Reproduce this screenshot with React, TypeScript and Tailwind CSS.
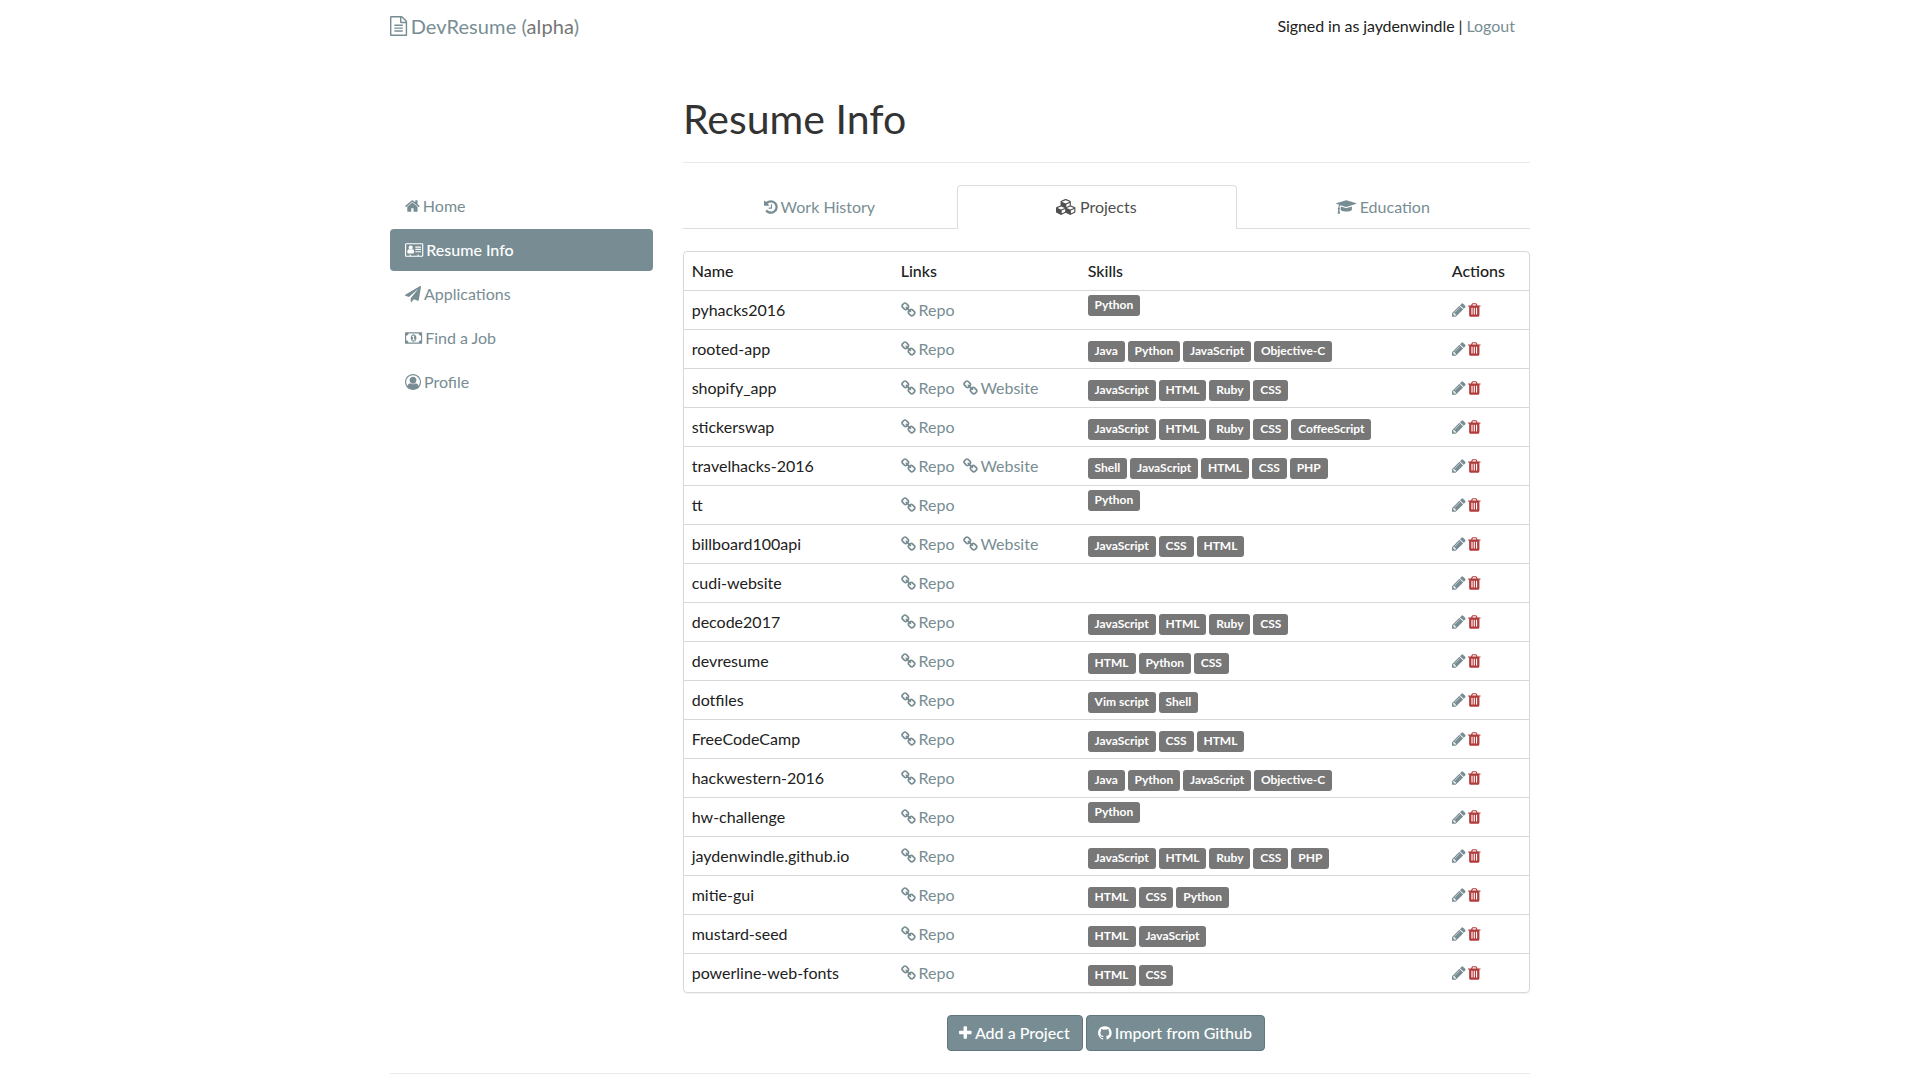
import React from 'react';

type IconDef = { x: number; w: number; d: string };

const ICONS = {
  file: { x: 128, w: 1536, d: 'M1596 380q28 28 48 76t20 88v1152q0 40-28 68t-68 28h-1344q-40 0-68-28t-28-68v-1600q0-40 28-68t68-28h896q40 0 88 20t76 48zm-444-244v376h376q-10-29-22-41l-313-313q-12-12-41-22zm384 1528v-1024h-416q-40 0-68-28t-28-68v-416h-768v1536h1280zm-1024-864q0-14 9-23t23-9h704q14 0 23 9t9 23v64q0 14-9 23t-23 9h-704q-14 0-23-9t-9-23v-64zm736 224q14 0 23 9t9 23v64q0 14-9 23t-23 9h-704q-14 0-23-9t-9-23v-64q0-14 9-23t23-9h704zm0 256q14 0 23 9t9 23v64q0 14-9 23t-23 9h-704q-14 0-23-9t-9-23v-64q0-14 9-23t23-9h704z' },
  home: { x: 64, w: 1664, d: 'M1472 992v480q0 26-19 45t-45 19h-384v-384h-256v384h-384q-26 0-45-19t-19-45v-480q0-1 .5-3t.5-3l575-474 575 474q1 2 1 6zm223-69l-62 74q-8 9-21 11h-3q-13 0-21-7l-692-577-692 577q-12 8-24 7-13-2-21-11l-62-74q-8-10-7-23.5t11-21.5l719-599q32-26 76-26t76 26l244 204v-195q0-14 9-23t23-9h192q14 0 23 9t9 23v408l219 182q10 8 11 21.5t-7 23.5z' },
  card: { x: 0, w: 2048, d: 'M1024 1131q0-64-9-117.5t-29.5-103-60.5-78-97-28.5q-6 4-30 18t-37.5 21.5-35.5 17.5-43 14.5-42 4.5-42-4.5-43-14.5-35.5-17.5-37.5-21.5-30-18q-57 0-97 28.5t-60.5 78-29.5 103-9 117.5 37 106.5 91 42.5h512q54 0 91-42.5t37-106.5zm-157-520q0-94-66.5-160.5t-160.5-66.5-160.5 66.5-66.5 160.5 66.5 160.5 160.5 66.5 160.5-66.5 66.5-160.5zm925 509v-64q0-14-9-23t-23-9h-576q-14 0-23 9t-9 23v64q0 14 9 23t23 9h576q14 0 23-9t9-23zm0-260v-56q0-15-10.5-25.5t-25.5-10.5h-568q-15 0-25.5 10.5t-10.5 25.5v56q0 15 10.5 25.5t25.5 10.5h568q15 0 25.5-10.5t10.5-25.5zm0-252v-64q0-14-9-23t-23-9h-576q-14 0-23 9t-9 23v64q0 14 9 23t23 9h576q14 0 23-9t9-23zm128 896v-1216q0-13-9.5-22.5t-22.5-9.5h-1728q-13 0-22.5 9.5t-9.5 22.5v1216q0 13 9.5 22.5t22.5 9.5h352v-96q0-14 9-23t23-9h64q14 0 23 9t9 23v96h768v-96q0-14 9-23t23-9h64q14 0 23 9t9 23v96h352q13 0 22.5-9.5t9.5-22.5zm128-1216v1216q0 66-47 113t-113 47h-1728q-66 0-113-47t-47-113v-1216q0-66 47-113t113-47h1728q66 0 113 47t47 113z' },
  plane: { x: 0, w: 1792, d: 'M1764 11q33 24 27 64l-256 1536q-5 29-32 45-14 8-31 8-11 0-24-5l-453-185-242 295q-18 23-49 23-13 0-22-4-19-7-30.5-23.5t-11.5-36.5v-349l864-1059-1069 925-395-162q-37-14-40-55-2-40 32-59l1664-960q15-9 32-9 20 0 36 11z' },
  money: { x: 0, w: 1920, d: 'M768 1152h384v-96h-128v-448h-114l-148 137 77 80q42-37 55-57h2v288h-128v96zm512-256q0 70-21 142t-59.5 134-101.5 101-138 39-138-39-101.5-101-59.5-134-21-142 21-142 59.5-134 101.5-101 138-39 138 39 101.5 101 59.5 134 21 142zm512 256v-512q-106 0-181-75t-75-181h-1152q0 106-75 181t-181 75v512q106 0 181 75t75 181h1152q0-106 75-181t181-75zm128-832v1152q0 26-19 45t-45 19h-1792q-26 0-45-19t-19-45v-1152q0-26 19-45t45-19h1792q26 0 45 19t19 45z' },
  user: { x: 0, w: 1792, d: 'M896 0q182 0 348 71t286 191 191 286 71 348q0 181-70.5 347t-190.5 286-286 191.5-349 71.5-349-71-285.5-191.5-190.5-286-71-347.5 71-348 191-286 286-191 348-71zm619 1351q149-205 149-455 0-156-61-298t-164-245-245-164-298-61-298 61-245 164-164 245-61 298q0 250 149 455 66-327 306-327 131 128 313 128t313-128q240 0 306 327zm-235-647q0-159-112.5-271.5t-271.5-112.5-271.5 112.5-112.5 271.5 112.5 271.5 271.5 112.5 271.5-112.5 112.5-271.5z' },
  history: { x: 128, w: 1536, d: 'M1664 896q0 156-61 298t-164 245-245 164-298 61q-172 0-327-72.5t-264-204.5q-7-10-6.5-22.5t8.5-20.5l137-138q10-9 25-9 16 2 23 12 73 95 179 147t225 52q104 0 198.5-40.5t163.5-109.5 109.5-163.5 40.5-198.5-40.5-198.5-109.5-163.5-163.5-109.5-198.5-40.5q-98 0-188 35.5t-160 101.5l137 138q31 30 14 69-17 40-59 40h-448q-26 0-45-19t-19-45v-448q0-42 40-59 39-17 69 14l130 129q107-101 244.5-156.5t284.5-55.5q156 0 298 61t245 164 164 245 61 298zm-640-288v448q0 14-9 23t-23 9h-320q-14 0-23-9t-9-23v-64q0-14 9-23t23-9h224v-352q0-14 9-23t23-9h64q14 0 23 9t9 23z' },
  cubes: { x: 0, w: 2304, d: 'M640 1632l384-192v-314l-384 164v342zm-64-454l404-173-404-173-404 173zm1088 454l384-192v-314l-384 164v342zm-64-454l404-173-404-173-404 173zm-448-293l384-165v-266l-384 164v267zm-64-379l441-189-441-189-441 189zm1088 518v416q0 36-19 67t-52 47l-448 224q-25 14-57 14t-57-14l-448-224q-5-2-7-4-2 2-7 4l-448 224q-25 14-57 14t-57-14l-448-224q-33-16-52-47t-19-67v-416q0-38 21.5-70t56.5-48l434-186v-400q0-38 21.5-70t56.5-48l448-192q23-10 50-10t50 10l448 192q35 16 56.5 48t21.5 70v400l434 186q36 16 57 48t21 70z' },
  cap: { x: 0, w: 2304, d: 'M1774 836l18 316q4 69-82 128t-235 93.5-323 34.5-323-34.5-235-93.5-82-128l18-316 574 181q22 7 48 7t48-7zm530-324q0 23-22 31l-1120 352q-4 1-10 1t-10-1l-652-206q-43 34-71 111.5t-34 178.5q63 36 63 109 0 69-58 107l58 433q2 14-8 25-9 11-24 11h-192q-15 0-24-11-10-11-8-25l58-433q-58-38-58-107 0-73 65-111 11-207 98-330l-333-104q-22-8-22-31t22-31l1120-352q4-1 10-1t10 1l1120 352q22 8 22 31z' },
  link: { x: 64, w: 1664, d: 'M1520 1216q0-40-28-68l-208-208q-28-28-68-28-42 0-72 32 3 3 19 18.5t21.5 21.5 15 19 13 25.5 3.5 27.5q0 40-28 68t-68 28q-15 0-27.5-3.5t-25.5-13-19-15-21.5-21.5-18.5-19q-33 31-33 73 0 40 28 68l206 207q27 27 68 27 40 0 68-26l147-146q28-28 28-67zm-703-705q0-40-28-68l-206-207q-28-28-68-28-39 0-68 27l-147 146q-28 28-28 67 0 40 28 68l208 208q27 27 68 27 42 0 72-31-3-3-19-18.5t-21.5-21.5-15-19-13-25.5-3.5-27.5q0-40 28-68t68-28q15 0 27.5 3.5t25.5 13 19 15 21.5 21.5 18.5 19q33-31 33-73zm895 705q0 120-85 203l-147 146q-83 83-203 83-121 0-204-85l-206-207q-83-83-83-203 0-123 88-209l-88-88q-86 88-208 88-120 0-204-84l-208-208q-84-84-84-204t85-203l147-146q83-83 203-83 121 0 204 85l206 207q83 83 83 203 0 123-88 209l88 88q86-88 208-88 120 0 204 84l208 208q84 84 84 204z' },
  pencil: { x: 128, w: 1536, d: 'M491 1536l91-91-235-235-91 91v107h128v128h107zm523-928q0-22-22-22-10 0-17 7l-542 542q-7 7-7 17 0 22 22 22 10 0 17-7l542-542q7-7 7-17zm-54-192l416 416-832 832h-416v-416zm683 96q0 53-37 90l-166 166-416-416 166-165q36-38 90-38 53 0 91 38l235 234q37 39 37 91z' },
  trash: { x: 192, w: 1408, d: 'M704 1376v-704q0-14-9-23t-23-9h-64q-14 0-23 9t-9 23v704q0 14 9 23t23 9h64q14 0 23-9t9-23zm256 0v-704q0-14-9-23t-23-9h-64q-14 0-23 9t-9 23v704q0 14 9 23t23 9h64q14 0 23-9t9-23zm256 0v-704q0-14-9-23t-23-9h-64q-14 0-23 9t-9 23v704q0 14 9 23t23 9h64q14 0 23-9t9-23zm-544-992h448l-48-117q-7-9-17-11h-317q-10 2-17 11zm928 32v64q0 14-9 23t-23 9h-96v948q0 83-47 143.5t-113 60.5h-832q-66 0-113-58.5t-47-141.5v-952h-96q-14 0-23-9t-9-23v-64q0-14 9-23t23-9h309l70-167q15-37 54-63t79-26h320q40 0 79 26t54 63l70 167h309q14 0 23 9t9 23z' },
  plus: { x: 192, w: 1408, d: 'M1600 736v192q0 40-28 68t-68 28h-416v416q0 40-28 68t-68 28h-192q-40 0-68-28t-28-68v-416h-416q-40 0-68-28t-28-68v-192q0-40 28-68t68-28h416v-416q0-40 28-68t68-28h192q40 0 68 28t28 68v416h416q40 0 68 28t28 68z' },
  github: { x: 128, w: 1536, d: 'M896 128q209 0 385.5 103t279.5 279.5 103 385.5q0 251-146.5 451.5t-378.5 277.5q-27 5-40-7t-13-30q0-3 .5-76.5t.5-134.5q0-97-52-142 57-6 102.5-18t94-39 81-66.5 53-105 20.5-150.5q0-119-79-206 37-91-8-204-28-9-81 11t-92 44l-38 24q-93-26-192-26t-192 26q-16-11-42.5-27t-83.5-38.5-85-13.5q-45 113-8 204-79 87-79 206 0 85 20.5 150t52.5 105 80.5 67 94 39 102.5 18q-39 36-49 103-21 10-45 15t-57 5-65.5-21.5-55.5-62.5q-19-32-48.5-52t-49.5-24l-20-3q-21 0-29 4.5t-5 11.5 9 14 13 12l7 5q22 10 43.5 38t31.5 51l10 23q13 38 44 61.5t67 30 69.5 7 55.5-3.5l23-4q0 38 .5 88.5t.5 54.5q0 18-13 30t-40 7q-232-77-378.5-277.5t-146.5-451.5q0-209 103-385.5t279.5-279.5 385.5-103z' },
} satisfies Record<string, IconDef>;

type IconName = keyof typeof ICONS;

function Icon({ name, size = 16 }: { name: IconName; size?: number }) {
  const icon = ICONS[name];
  return (
    <svg
      className="shrink-0 overflow-visible"
      width={(icon.w / 1792) * size}
      height={size}
      viewBox={`${icon.x} 0 ${icon.w} 1792`}
      fill="currentColor"
      fillRule={name === 'card' ? 'evenodd' : 'nonzero'}
    >
      <path d={icon.d} />
    </svg>
  );
}

const NAV: { icon: IconName; label: string; active?: boolean }[] = [
  { icon: 'home', label: 'Home' },
  { icon: 'card', label: 'Resume Info', active: true },
  { icon: 'plane', label: 'Applications' },
  { icon: 'money', label: 'Find a Job' },
  { icon: 'user', label: 'Profile' },
];

const PROJECTS: { name: string; site?: boolean; skills: string[] }[] = [
  { name: 'pyhacks2016', skills: ['Python'] },
  { name: 'rooted-app', skills: ['Java', 'Python', 'JavaScript', 'Objective-C'] },
  { name: 'shopify_app', site: true, skills: ['JavaScript', 'HTML', 'Ruby', 'CSS'] },
  { name: 'stickerswap', skills: ['JavaScript', 'HTML', 'Ruby', 'CSS', 'CoffeeScript'] },
  { name: 'travelhacks-2016', site: true, skills: ['Shell', 'JavaScript', 'HTML', 'CSS', 'PHP'] },
  { name: 'tt', skills: ['Python'] },
  { name: 'billboard100api', site: true, skills: ['JavaScript', 'CSS', 'HTML'] },
  { name: 'cudi-website', skills: [] },
  { name: 'decode2017', skills: ['JavaScript', 'HTML', 'Ruby', 'CSS'] },
  { name: 'devresume', skills: ['HTML', 'Python', 'CSS'] },
  { name: 'dotfiles', skills: ['Vim script', 'Shell'] },
  { name: 'FreeCodeCamp', skills: ['JavaScript', 'CSS', 'HTML'] },
  { name: 'hackwestern-2016', skills: ['Java', 'Python', 'JavaScript', 'Objective-C'] },
  { name: 'hw-challenge', skills: ['Python'] },
  { name: 'jaydenwindle.github.io', skills: ['JavaScript', 'HTML', 'Ruby', 'CSS', 'PHP'] },
  { name: 'mitie-gui', skills: ['HTML', 'CSS', 'Python'] },
  { name: 'mustard-seed', skills: ['HTML', 'JavaScript'] },
  { name: 'powerline-web-fonts', skills: ['HTML', 'CSS'] },
];

function RowLink({ label }: { label: string }) {
  return (
    <a className="flex items-center gap-[3px] text-[#788d93]">
      <Icon name="link" />
      <span>{label}</span>
    </a>
  );
}

export default function App() {
  return (
    <div className="h-[1080px] overflow-hidden bg-white font-['Lato',sans-serif] text-base leading-6 text-[#212121]">
      <div className="mx-auto w-[1140px]">
        <header className="flex h-[54px] items-center justify-between pr-[15px] pb-[2px]">
          <a className="flex items-center gap-[3.5px] text-xl text-[#788d93]">
            <Icon name="file" size={20} />
            <span className="tracking-[0.1px]">
              DevResume (<span className="text-[#757575]">alpha</span>)
            </span>
          </a>
          <p className="tracking-[-0.1px]">
            Signed in as jaydenwindle | <a className="tracking-normal text-[#788d93]">Logout</a>
          </p>
        </header>

        <div className="flex h-[1020px] justify-between border-b border-[#ebebeb]">
          <nav className="flex w-[263px] flex-col gap-[2px] pt-[131px]">
            {NAV.map((item) => (
              <a
                key={item.label}
                className={
                  item.active
                    ? 'flex h-[42px] items-center gap-[3px] rounded bg-[#788d93] px-[15px] font-medium text-white'
                    : 'flex h-[42px] items-center gap-[3px] px-[15px] text-[#788d93]'
                }
              >
                <Icon name={item.icon} />
                <span>{item.label}</span>
              </a>
            ))}
          </nav>

          <main className="w-[847px]">
            <h1 className="flex h-[109px] items-end border-b border-[#ebebeb] pb-[18px] text-[41px] leading-[50px] text-[#333]">Resume Info</h1>

            <div className="mt-[22px] flex h-[44px] leading-5">
              <a className="flex w-[274px] items-center justify-center gap-[3px] border-b border-[#ddd] pr-px text-[#788d93]">
                <Icon name="history" />
                <span>Work History</span>
              </a>
              <a className="flex w-[280px] items-center justify-center gap-[3px] rounded-t border border-b-0 border-[#ddd] pr-px pb-[2px] text-[#4f4f4f]">
                <Icon name="cubes" />
                <span>Projects</span>
              </a>
              <a className="flex flex-1 items-center justify-center gap-[3px] border-b border-[#ddd] pr-px text-[#788d93]">
                <Icon name="cap" />
                <span>Education</span>
              </a>
            </div>

            <div className="mt-[22px] rounded border border-[#d8d8d8] shadow-[0_1px_1px_rgba(0,0,0,0.05)]">
              <div className="grid h-[38px] grid-cols-[209px_187px_364px_1fr] items-center pl-[7.7px] font-medium">
                <span>Name</span>
                <span>Links</span>
                <span>Skills</span>
                <span>Actions</span>
              </div>
              {PROJECTS.map((project) => (
                <div
                  key={project.name}
                  className="grid h-[39px] grid-cols-[209px_187px_364px_1fr] items-center border-t border-[#d8d8d8] pl-[7.7px]"
                >
                  <span>{project.name}</span>
                  <div className="flex gap-2">
                    <RowLink label="Repo" />
                    {project.site && <RowLink label="Website" />}
                  </div>
                  <div className={project.skills.length === 1 ? 'flex gap-[3px] pb-[9px]' : 'flex gap-[3px] pt-[4px]'}>
                    {project.skills.map((skill) => (
                      <span
                        key={skill}
                        className="h-[21px] rounded-[3px] bg-[#777] px-[6.9px] text-xs leading-[20px] font-bold whitespace-nowrap text-white"
                      >
                        {skill}
                      </span>
                    ))}
                  </div>
                  <div className="flex gap-[3px]">
                    <span className="text-[#788d93]">
                      <Icon name="pencil" />
                    </span>
                    <span className="text-[#b23b3b]">
                      <Icon name="trash" />
                    </span>
                  </div>
                </div>
              ))}
            </div>

            <div className="mt-[22px] flex justify-center gap-[3px] pr-[2px] font-medium text-white">
              <button className="flex h-9 w-[136px] items-center justify-center gap-[3px] rounded border border-[#62777d] bg-[#788d93]">
                <Icon name="plus" />
                <span>Add a Project</span>
              </button>
              <button className="flex h-9 w-[179px] items-center justify-center gap-[3px] rounded border border-[#62777d] bg-[#788d93]">
                <Icon name="github" />
                <span>Import from Github</span>
              </button>
            </div>
          </main>
        </div>
      </div>
    </div>
  );
}
